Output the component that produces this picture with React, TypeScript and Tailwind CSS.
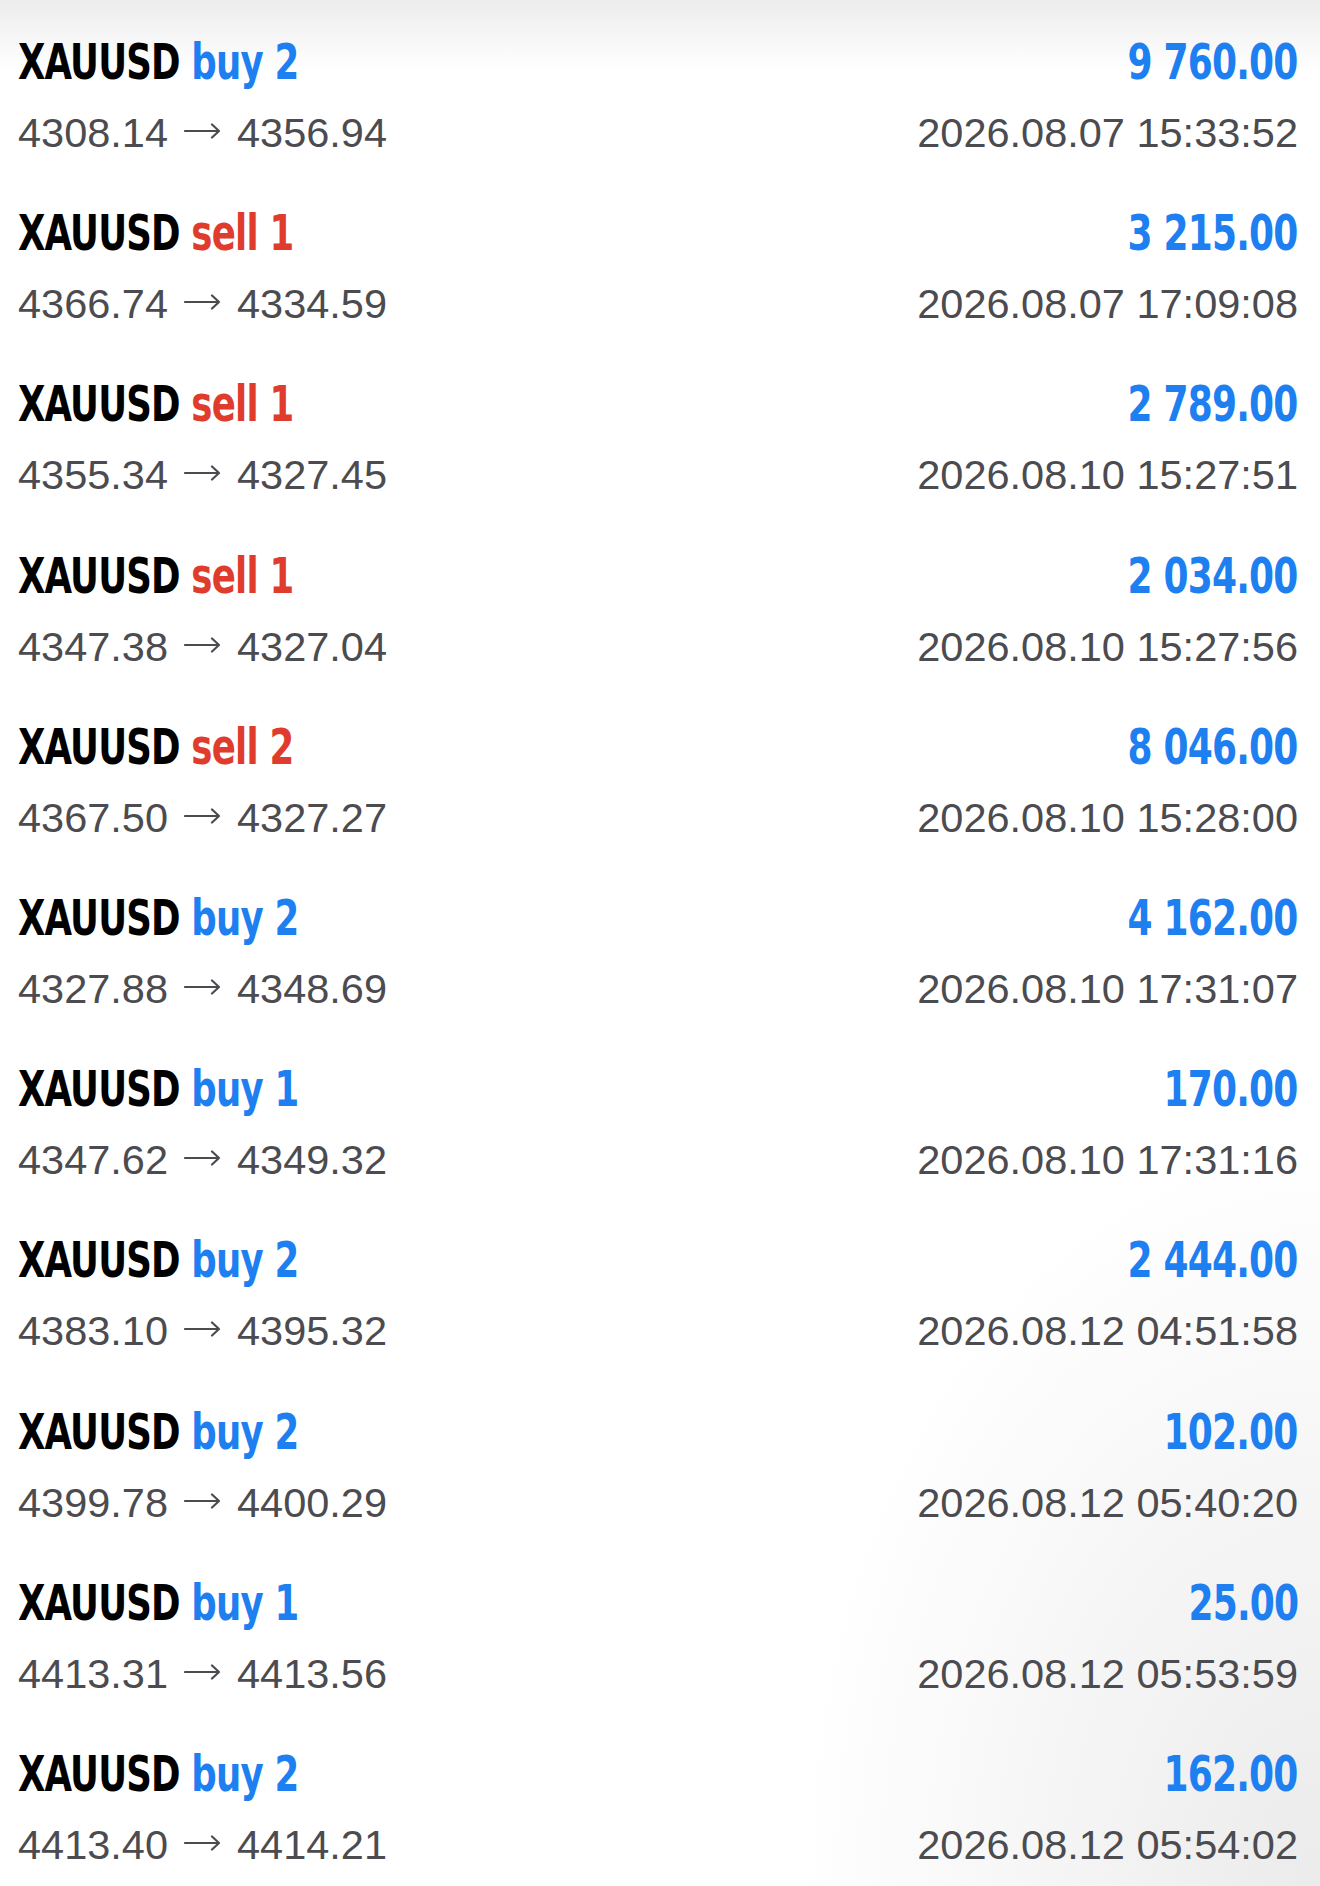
import React from "react";

type Deal = {
  side: "buy" | "sell";
  lots: number;
  open: string;
  close: string;
  profit: string;
  time: string;
};

const DEALS: Deal[] = [
  { side: "buy", lots: 2, open: "4308.14", close: "4356.94", profit: "9 760.00", time: "2026.08.07 15:33:52" },
  { side: "sell", lots: 1, open: "4366.74", close: "4334.59", profit: "3 215.00", time: "2026.08.07 17:09:08" },
  { side: "sell", lots: 1, open: "4355.34", close: "4327.45", profit: "2 789.00", time: "2026.08.10 15:27:51" },
  { side: "sell", lots: 1, open: "4347.38", close: "4327.04", profit: "2 034.00", time: "2026.08.10 15:27:56" },
  { side: "sell", lots: 2, open: "4367.50", close: "4327.27", profit: "8 046.00", time: "2026.08.10 15:28:00" },
  { side: "buy", lots: 2, open: "4327.88", close: "4348.69", profit: "4 162.00", time: "2026.08.10 17:31:07" },
  { side: "buy", lots: 1, open: "4347.62", close: "4349.32", profit: "170.00", time: "2026.08.10 17:31:16" },
  { side: "buy", lots: 2, open: "4383.10", close: "4395.32", profit: "2 444.00", time: "2026.08.12 04:51:58" },
  { side: "buy", lots: 2, open: "4399.78", close: "4400.29", profit: "102.00", time: "2026.08.12 05:40:20" },
  { side: "buy", lots: 1, open: "4413.31", close: "4413.56", profit: "25.00", time: "2026.08.12 05:53:59" },
  { side: "buy", lots: 2, open: "4413.40", close: "4414.21", profit: "162.00", time: "2026.08.12 05:54:02" },
];

const COND = "font-['DejaVu_Sans_Condensed','DejaVu_Sans',sans-serif]";
const BODY = "font-['Liberation_Sans','Arial',sans-serif]";

function Arrow() {
  return (
    <svg className="inline-block mx-[16px] -mt-[4px]" width="37" height="16" viewBox="0 0 37 16" fill="none">
      <path d="M1 8H35M28 1.5L35 8L28 14.5" stroke="#4b4b50" strokeWidth="2.2" strokeLinecap="round" strokeLinejoin="round" />
    </svg>
  );
}

function DealRow({ d }: { d: Deal }) {
  return (
    <div className="h-[171.2px] pt-[32px] pl-[18px] pr-[22px]">
      <div className={`flex items-center justify-between ${COND} font-bold text-[50px] leading-[60px] tracking-[-1px]`}>
        <div className="inline-block origin-left scale-x-[0.79] whitespace-nowrap">
          <span className="text-black">XAUUSD</span>{" "}
          <span className={d.side === "buy" ? "text-[#1e7ff0]" : "text-[#e03c2e]"}>
            {d.side} {d.lots}
          </span>
        </div>
        <div className="inline-block origin-right scale-x-[0.8] whitespace-nowrap text-[#1e7ff0]">{d.profit}</div>
      </div>
      <div className={`mt-[16px] flex items-center justify-between ${BODY} text-[41.5px] leading-[50px] text-[#4b4b50]`}>
        <div className="flex items-center whitespace-nowrap">
          <span>{d.open}</span>
          <Arrow />
          <span>{d.close}</span>
        </div>
        <div>{d.time}</div>
      </div>
    </div>
  );
}

export default function App() {
  return (
    <div className="w-[1320px] h-[1886px] overflow-hidden bg-[radial-gradient(ellipse_at_100%_100%,#ebebeb,rgba(255,255,255,0)_28%),linear-gradient(to_bottom,#ececec,#ffffff_70px)]">
      {DEALS.map((d, i) => (
        <DealRow key={i} d={d} />
      ))}
    </div>
  );
}
